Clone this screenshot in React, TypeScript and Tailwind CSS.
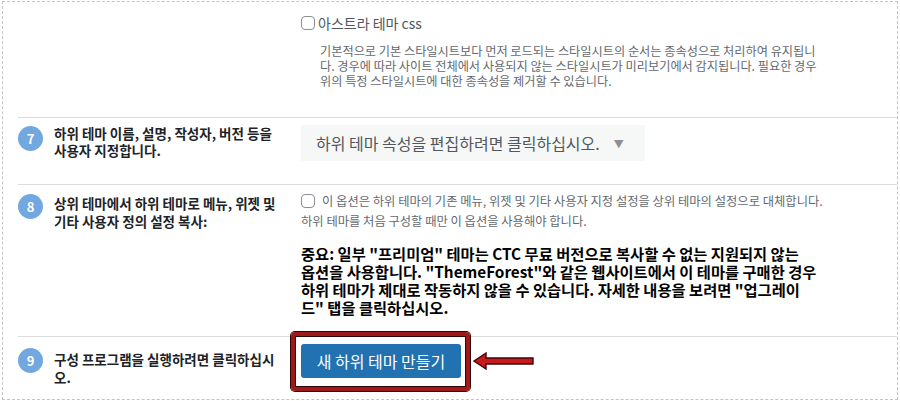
const font = "font-['Noto_Sans_CJK_KR','Noto_Sans',sans-serif]";

const StepBadge = ({ n }: { n: number }) => (
  <div className="flex h-[25px] w-[25px] shrink-0 items-center justify-center rounded-full bg-[#72a8e0] text-[13px] font-bold text-white">
    {n}
  </div>
);

const Checkbox = () => (
  <span className="inline-block h-[14px] w-[14px] shrink-0 rounded-[4px] border border-[#8c8f94] bg-white" />
);

const LeftArrow = () => (
  <svg width="64" height="22" viewBox="0 0 64 22" className="block">
    <polygon
      points="2,11 14,3 14,8 61,8 61,14 14,14 14,19"
      fill="#c8191e"
      stroke="#3b0707"
      strokeWidth="1.4"
      strokeLinejoin="miter"
    />
  </svg>
);

export default function App() {
  return (
    <div className={`h-[401px] w-[900px] bg-white pl-[2px] pt-[1px] ${font}`}>
      <div className="flex h-[399px] w-[896px] flex-col border border-dashed border-[#c3c4c7]">
        {/* row: astra css */}
        <div className="ml-[15px] flex h-[116px] shrink-0 border-b border-[#dcdcde]">
          <div className="w-[283px] shrink-0" />
          <div className="pt-[11px]">
            <label className="flex h-[20px] items-center gap-[3px] text-[14px] text-[#50575e]">
              <Checkbox />
              <span>아스트라 테마 css</span>
            </label>
            <p className="mt-[11px] whitespace-nowrap pl-[19px] text-[12.2px] leading-[15px] text-[#646970]">
              기본적으로 기본 스타일시트보다 먼저 로드되는 스타일시트의 순서는 종속성으로 처리하여 유지됩니
              <br />
              다. 경우에 따라 사이트 전체에서 사용되지 않는 스타일시트가 미리보기에서 감지됩니다. 필요한 경우
              <br />
              위의 특정 스타일시트에 대한 종속성을 제거할 수 있습니다.
            </p>
          </div>
        </div>

        {/* row 7 */}
        <div className="ml-[15px] flex h-[67px] shrink-0 border-b border-[#dcdcde]">
          <div className="flex w-[283px] shrink-0 items-start gap-[11px] pt-[8px]">
            <StepBadge n={7} />
            <div className="-mt-[1px] whitespace-nowrap text-[13.5px] font-semibold leading-[17px] text-[#1d2327]">
              하위 테마 이름, 설명, 작성자, 버전 등을
              <br />
              사용자 지정합니다.
            </div>
          </div>
          <div className="pt-[7px]">
            <div className="flex h-[36px] w-[344px] items-center bg-[#f6f7f7] pl-[15px] text-[16px] text-[#50575e]">
              하위 테마 속성을 편집하려면 클릭하십시오.
              <span className="ml-[14px] text-[10px] text-[#8c8f94]">▼</span>
            </div>
          </div>
        </div>

        {/* row 8 */}
        <div className="ml-[15px] flex h-[152px] shrink-0 border-b border-[#dcdcde]">
          <div className="flex w-[283px] shrink-0 items-start gap-[11px] pt-[9px]">
            <StepBadge n={8} />
            <div className="whitespace-nowrap text-[13.5px] font-semibold leading-[18px] text-[#1d2327]">
              상위 테마에서 하위 테마로 메뉴, 위젯 및
              <br />
              기타 사용자 정의 설정 복사:
            </div>
          </div>
          <div className="pt-[8px]">
            <label className="flex h-[16px] items-center gap-[7px] whitespace-nowrap text-[12.3px] text-[#646970]">
              <Checkbox />
              <span>이 옵션은 하위 테마의 기존 메뉴, 위젯 및 기타 사용자 지정 설정을 상위 테마의 설정으로 대체합니다.</span>
            </label>
            <p className="mt-[3px] text-[12.3px] leading-[19px] text-[#646970]">
              하위 테마를 처음 구성할 때만 이 옵션을 사용해야 합니다.
            </p>
            <p className="mt-[13px] whitespace-nowrap text-[15.3px] font-bold leading-[18px] text-black">
              중요: 일부 "프리미엄" 테마는 CTC 무료 버전으로 복사할 수 없는 지원되지 않는
              <br />
              옵션을 사용합니다. "ThemeForest"와 같은 웹사이트에서 이 테마를 구매한 경우
              <br />
              하위 테마가 제대로 작동하지 않을 수 있습니다. 자세한 내용을 보려면 "업그레이
              <br />
              드" 탭을 클릭하십시오.
            </p>
          </div>
        </div>

        {/* row 9 */}
        <div className="ml-[15px] flex flex-1">
          <div className="flex w-[283px] shrink-0 items-start gap-[11px] pt-[11px]">
            <StepBadge n={9} />
            <div className="whitespace-nowrap pt-[2px] text-[13.5px] font-semibold leading-[18px] text-[#1d2327]">
              구성 프로그램을 실행하려면 클릭하십시
              <br />
              오.
            </div>
          </div>
          <div className="pt-[7px]">
            <div className="relative">
              <button
                type="button"
                className="h-[34px] w-[160px] rounded-[3px] bg-[#2271b1] text-[16px] text-white"
              >
                새 하위 테마 만들기
              </button>
              <div className="pointer-events-none absolute -bottom-[13px] -left-[10px] -right-[9px] -top-[12px] rounded-[4px] border-[4px] border-[#9e1a1a] shadow-[0_0_0_1px_#2e0404,inset_0_0_0_1px_#2e0404]" />
              <div className="absolute left-[171px] top-[6px]">
                <LeftArrow />
              </div>
            </div>
          </div>
        </div>
      </div>
    </div>
  );
}
